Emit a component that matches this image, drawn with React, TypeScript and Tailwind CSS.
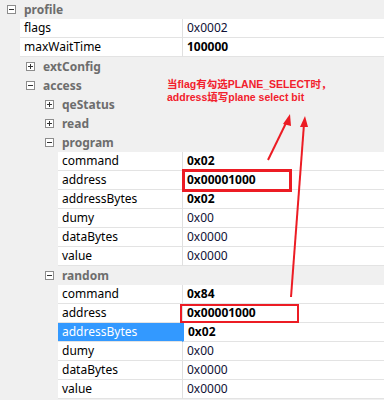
import React from "react"

type Row =
	| { kind: "group"; level: number; label: string; open: boolean }
	| { kind: "leaf"; level: number; name: string; value: string; bold?: boolean; selected?: boolean }

const ROWS: Row[] = [
	{ kind: "group", level: 0, label: "profile", open: true },
	{ kind: "leaf", level: 1, name: "flags", value: "0x0002" },
	{ kind: "leaf", level: 1, name: "maxWaitTime", value: "100000", bold: true },
	{ kind: "group", level: 1, label: "extConfig", open: false },
	{ kind: "group", level: 1, label: "access", open: true },
	{ kind: "group", level: 2, label: "qeStatus", open: false },
	{ kind: "group", level: 2, label: "read", open: false },
	{ kind: "group", level: 2, label: "program", open: true },
	{ kind: "leaf", level: 3, name: "command", value: "0x02", bold: true },
	{ kind: "leaf", level: 3, name: "address", value: "0x00001000", bold: true },
	{ kind: "leaf", level: 3, name: "addressBytes", value: "0x02", bold: true },
	{ kind: "leaf", level: 3, name: "dumy", value: "0x00" },
	{ kind: "leaf", level: 3, name: "dataBytes", value: "0x0000" },
	{ kind: "leaf", level: 3, name: "value", value: "0x0000" },
	{ kind: "group", level: 2, label: "random", open: true },
	{ kind: "leaf", level: 3, name: "command", value: "0x84", bold: true },
	{ kind: "leaf", level: 3, name: "address", value: "0x00001000", bold: true },
	{ kind: "leaf", level: 3, name: "addressBytes", value: "0x02", bold: true, selected: true },
	{ kind: "leaf", level: 3, name: "dumy", value: "0x00" },
	{ kind: "leaf", level: 3, name: "dataBytes", value: "0x0000" },
	{ kind: "leaf", level: 3, name: "value", value: "0x0000" },
]

const INDENT = ["pl-[7px]", "pl-[26px]", "pl-[45px]", "pl-[64px]"]
const CELL_LEFT = ["w-[1px]", "w-[20px]", "w-[39px]", "w-[58px]"]

function Expander({ open }: { open: boolean }) {
	return (
		<svg width="9" height="9" viewBox="0 0 9 9" className="shrink-0">
			<rect x="0.5" y="0.5" width="8" height="8" fill="#fff" stroke="#8c8c8c" />
			<path d="M2 4.5h5" stroke="#333" />
			{!open && <path d="M4.5 2v5" stroke="#333" />}
		</svg>
	)
}

function GroupRow({ level, label, open }: { level: number; label: string; open: boolean }) {
	return (
		<div className={`flex items-center h-[19px] ${INDENT[level]}`}>
			<Expander open={open} />
			<span className="ml-[8px] font-bold text-[#6d6d6d]">{label}</span>
		</div>
	)
}

function LeafRow({ level, name, value, bold, selected }: { level: number; name: string; value: string; bold?: boolean; selected?: boolean }) {
	return (
		<div className="flex h-[19px]">
			<div className={`shrink-0 ${CELL_LEFT[level]}`} />
			<div
				className={`flex-1 flex items-center pl-[4px] border-b border-[#e3e3e3] ${
					selected ? "bg-[#3399ff] text-white" : "bg-white text-black"
				}`}>
				{name}
			</div>
			<div
				className={`w-[202px] shrink-0 flex items-center pl-[4px] bg-white border-b border-[#e3e3e3] ${
					selected ? "border-l-2 border-l-[#3399ff] pl-[3px]" : "border-l border-l-[#e0e0e0]"
				} ${bold ? "font-bold text-black" : "text-[#101035]"}`}>
				{value}
			</div>
		</div>
	)
}

export default function App() {
	return (
		<div className="relative w-[384px] h-[400px] overflow-hidden bg-[#f0f0f0] text-[12px] leading-none font-['Noto_Sans',sans-serif]">
			{ROWS.map((row, i) =>
				row.kind === "group" ? (
					<GroupRow key={i} level={row.level} label={row.label} open={row.open} />
				) : (
					<LeafRow key={i} {...row} />
				),
			)}

			{/* annotation */}
			<div className="absolute left-[167px] top-[78px] text-[10.5px] leading-[13px] font-bold text-[#f2202c] font-['Liberation_Sans','Noto_Sans_CJK_SC',sans-serif] whitespace-nowrap">
				<div>当flag有勾选PLANE_SELECT时，</div>
				<div>address填写plane select bit</div>
			</div>

			{/* red boxes */}
			<div className="absolute left-[182px] top-[169px] w-[110px] h-[23px] border-[3px] border-[#ec1c24]" />
			<div className="absolute left-[180px] top-[304px] w-[119px] h-[19px] border-[2px] border-[#ec1c24]" />

			{/* arrows */}
			<svg className="absolute left-0 top-0" width="384" height="400" viewBox="0 0 384 400">
				<g stroke="#ec1c24" strokeWidth="2" fill="#ec1c24">
					<line x1="268" y1="160" x2="287" y2="121" />
					<path d="M290 114 L283 124 L291 126 Z" stroke="none" />
					<line x1="291" y1="297" x2="304" y2="124" />
					<path d="M305 116 L300 127 L308 127 Z" stroke="none" />
				</g>
			</svg>
		</div>
	)
}
